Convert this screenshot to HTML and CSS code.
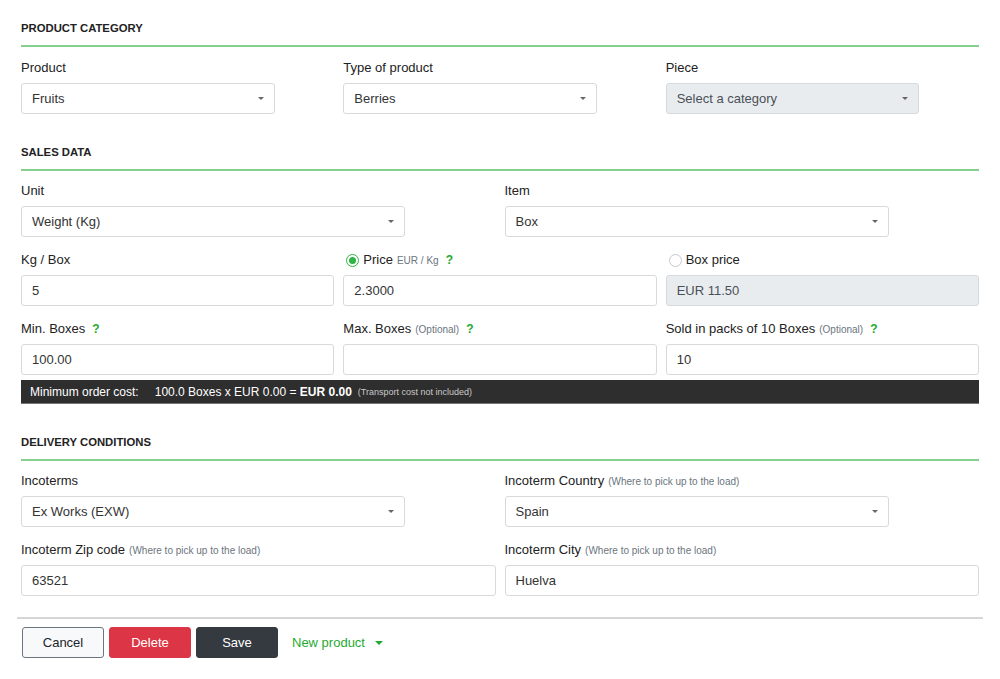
FILE: index.html
```html
<!DOCTYPE html>
<html>
<head>
<meta charset="utf-8">
<link rel="stylesheet" href="styles.css">
</head>
<body>
<div class="page">
  <section class="section">
    <h2 class="heading first">PRODUCT CATEGORY</h2>
    <div class="row cols3">
      <div class="group">
        <label class="label">Product</label>
        <div class="select short"><span>Fruits</span><i class="caret"></i></div>
      </div>
      <div class="group">
        <label class="label">Type of product</label>
        <div class="select short"><span>Berries</span><i class="caret"></i></div>
      </div>
      <div class="group">
        <label class="label">Piece</label>
        <div class="select short disabled"><span>Select a category</span><i class="caret"></i></div>
      </div>
    </div>
  </section>

  <section class="section">
    <h2 class="heading">SALES DATA</h2>
    <div class="row cols2">
      <div class="group">
        <label class="label">Unit</label>
        <div class="select short"><span>Weight (Kg)</span><i class="caret"></i></div>
      </div>
      <div class="group">
        <label class="label">Item</label>
        <div class="select short"><span>Box</span><i class="caret"></i></div>
      </div>
    </div>
    <div class="row cols3">
      <div class="group">
        <label class="label">Kg / Box</label>
        <div class="input">5</div>
      </div>
      <div class="group">
        <label class="label"><span class="radio checked"></span>Price <small>EUR / Kg</small> <b class="help">?</b></label>
        <div class="input">2.3000</div>
      </div>
      <div class="group">
        <label class="label"><span class="radio"></span>Box price</label>
        <div class="input disabled">EUR 11.50</div>
      </div>
    </div>
    <div class="row cols3 tight">
      <div class="group">
        <label class="label">Min. Boxes <b class="help">?</b></label>
        <div class="input">100.00</div>
      </div>
      <div class="group">
        <label class="label">Max. Boxes <small>(Optional)</small> <b class="help">?</b></label>
        <div class="input"></div>
      </div>
      <div class="group">
        <label class="label">Sold in packs of 10 Boxes <small>(Optional)</small> <b class="help">?</b></label>
        <div class="input">10</div>
      </div>
    </div>
    <div class="summary">
      <span class="sum-label">Minimum order cost:</span>
      <span class="sum-value">100.0 Boxes x EUR 0.00 = <b>EUR 0.00</b></span>
      <small>(Transport cost not included)</small>
    </div>
  </section>

  <section class="section">
    <h2 class="heading">DELIVERY CONDITIONS</h2>
    <div class="row cols2">
      <div class="group">
        <label class="label">Incoterms</label>
        <div class="select short"><span>Ex Works (EXW)</span><i class="caret"></i></div>
      </div>
      <div class="group">
        <label class="label">Incoterm Country <small>(Where to pick up to the load)</small></label>
        <div class="select short"><span>Spain</span><i class="caret"></i></div>
      </div>
    </div>
    <div class="row cols2">
      <div class="group">
        <label class="label">Incoterm Zip code <small>(Where to pick up to the load)</small></label>
        <div class="input">63521</div>
      </div>
      <div class="group">
        <label class="label">Incoterm City <small>(Where to pick up to the load)</small></label>
        <div class="input">Huelva</div>
      </div>
    </div>
  </section>

  <div class="actions">
    <button class="btn btn-cancel">Cancel</button>
    <button class="btn btn-delete">Delete</button>
    <button class="btn btn-save">Save</button>
    <button class="btn-link">New product <i class="caret green"></i></button>
  </div>
</div>
</body>
</html>
```

FILE: styles.css
```css
* { box-sizing: border-box; }
html, body { margin: 0; background: #fff; }
body {
  font-family: "Liberation Sans", Arial, Helvetica, sans-serif;
  color: #212529;
  font-size: 13px;
}
.page {
  padding: 21px 21px 0 21px;
  width: 1000px;
}
.section { margin-bottom: 31px; }
.section:last-of-type { margin-bottom: 0; }
.heading {
  margin: 0 0 12px 0;
  font-size: 11.3px;
  line-height: 14px;
  font-weight: bold;
  color: #222;
  padding-bottom: 10px;
  border-bottom: 2px solid #86d08f;
}
.heading.first { margin-bottom: 13px; }
.row {
  display: grid;
  column-gap: 9px;
  margin-bottom: 15px;
}
.row:last-child { margin-bottom: 0; }
.row.tight { margin-bottom: 5px; }
.cols3 { grid-template-columns: 1fr 1fr 1fr; }
.cols2 { grid-template-columns: 1fr 1fr; }
.group { display: flex; flex-direction: column; align-items: flex-start; }
.label {
  display: flex;
  align-items: center;
  line-height: 16px;
  height: 16px;
  margin-bottom: 7px;
  font-size: 13px;
  color: #222;
  white-space: nowrap;
}
.label small {
  font-size: 10px;
  color: #6c757d;
  margin-left: 4px;
  padding-top: 2px;
}
.help {
  color: #1faa2f;
  font-weight: bold;
  font-size: 12px;
  margin-left: 7px;
}
.radio {
  width: 13px;
  height: 13px;
  border-radius: 50%;
  border: 1px solid #c8c8c8;
  margin: 0 4px 0 3px;
  background: #fff;
  position: relative;
}
.radio.checked { border-color: #2fb344; }
.radio.checked::after {
  content: "";
  position: absolute;
  left: 2px; top: 2px;
  width: 7px; height: 7px;
  border-radius: 50%;
  background: #2fb344;
}
.select, .input {
  height: 31px;
  border: 1px solid #d7dadd;
  border-radius: 3px;
  background: #fff;
  padding: 0 10px;
  display: flex;
  align-items: center;
  font-size: 13px;
  color: #333;
  width: 100%;
}
.select { justify-content: space-between; }
.select.short { width: 81%; }
.disabled { background: #e9ecef; color: #495057; }
.caret {
  display: inline-block;
  width: 0; height: 0;
  border-left: 3.5px solid transparent;
  border-right: 3.5px solid transparent;
  border-top: 3.5px solid #666;
}
.caret.green { border-top-color: #1faa2f; border-left-width: 4px; border-right-width: 4px; border-top-width: 4px; margin-left: 6px; vertical-align: 2px; }
.summary {
  height: 24px;
  background: #2e2e2e;
  color: #fff;
  display: flex;
  align-items: center;
  padding-left: 9px;
  font-size: 12px;
  border-bottom: 1px solid #777;
}
.sum-label { margin-right: 16px; }
.sum-value b { font-weight: bold; }
.summary small {
  font-size: 9px;
  color: #c9c9c9;
  margin-left: 6px;
}
.actions {
  margin: 21px -4px 0 -4px;
  border-top: 2px solid #d6d6d6;
  padding: 8px 0 0 5px;
  display: flex;
  align-items: center;
  gap: 5px;
}
.btn {
  height: 31px;
  width: 82px;
  border-radius: 3px;
  font-family: inherit;
  font-size: 13px;
  border: 1px solid transparent;
  padding: 0;
}
.btn-cancel { background: #f8f9fa; border-color: #6c757d; color: #212529; }
.btn-delete { background: #dc3545; border-color: #dc3545; color: #fff; }
.btn-save { background: #343a40; border-color: #343a40; color: #fff; }
.btn-link {
  background: none;
  border: none;
  font-family: inherit;
  font-size: 13px;
  color: #1faa2f;
  margin-left: 9px;
  padding: 0;
}
```
